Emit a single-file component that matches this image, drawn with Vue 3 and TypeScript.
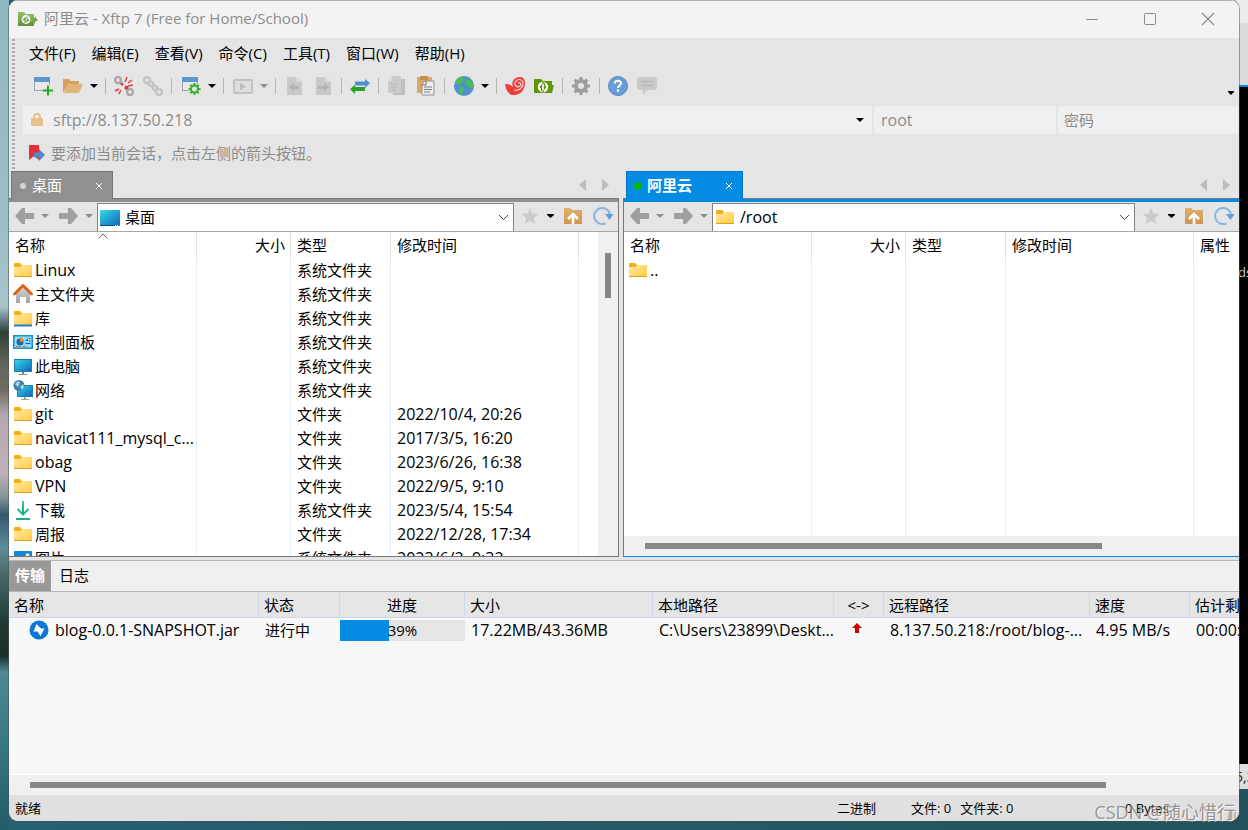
<script setup lang="ts">
interface Row { icon: string; name: string; type: string; date: string }
interface Pane { id: string; title: string; active: boolean; pathIcon: string; path: string; rows: Row[] }

const menus: string[] = ['文件(F)', '编辑(E)', '查看(V)', '命令(C)', '工具(T)', '窗口(W)', '帮助(H)']

const sys = '系统文件夹'
const dir = '文件夹'
const panes: Pane[] = [
  {
    id: 'local', title: '桌面', active: false, pathIcon: 'desktop', path: '桌面',
    rows: [
      { icon: 'folder', name: 'Linux', type: sys, date: '' },
      { icon: 'home', name: '主文件夹', type: sys, date: '' },
      { icon: 'library', name: '库', type: sys, date: '' },
      { icon: 'control', name: '控制面板', type: sys, date: '' },
      { icon: 'pc', name: '此电脑', type: sys, date: '' },
      { icon: 'network', name: '网络', type: sys, date: '' },
      { icon: 'folder', name: 'git', type: dir, date: '2022/10/4, 20:26' },
      { icon: 'folder', name: 'navicat111_mysql_c...', type: dir, date: '2017/3/5, 16:20' },
      { icon: 'folder', name: 'obag', type: dir, date: '2023/6/26, 16:38' },
      { icon: 'folder', name: 'VPN', type: dir, date: '2022/9/5, 9:10' },
      { icon: 'download', name: '下载', type: sys, date: '2023/5/4, 15:54' },
      { icon: 'folder', name: '周报', type: dir, date: '2022/12/28, 17:34' },
      { icon: 'picture', name: '图片', type: sys, date: '2023/6/2, 9:32' },
    ],
  },
  {
    id: 'remote', title: '阿里云', active: true, pathIcon: 'folder', path: '/root',
    rows: [{ icon: 'folder', name: '..', type: '', date: '' }],
  },
]

const isLatin = (text: string): boolean => /^[\x20-\x7e]+$/.test(text)

const progress = 39
</script>

<template>
  <div class="desktop">
    <div class="behind" aria-hidden="true">
      <div class="behind-top"></div>
      <div class="behind-term"><span>ds</span></div>
      <div class="behind-status"><span>5,3</span></div>
    </div>

    <svg class="defs" aria-hidden="true">
      <defs>
        <linearGradient id="gFolder" x1="0" y1="0" x2="1" y2="1"><stop offset="0" stop-color="#ffe9a6" /><stop offset="1" stop-color="#ffca3e" /></linearGradient>
        <linearGradient id="gScreen" x1="0" y1="0" x2="1" y2="1"><stop offset="0" stop-color="#35dbe6" /><stop offset="1" stop-color="#0b63bd" /></linearGradient>
        <linearGradient id="gHome" x1="0" y1="0" x2="0" y2="1"><stop offset="0" stop-color="#d8d8d8" /><stop offset="1" stop-color="#a2a2a2" /></linearGradient>
        <linearGradient id="gDown" x1="0" y1="0" x2="0" y2="1"><stop offset="0" stop-color="#35cd93" /><stop offset="1" stop-color="#12a688" /></linearGradient>
        <linearGradient id="gTan" x1="0" y1="0" x2="0" y2="1"><stop offset="0" stop-color="#e0b06c" /><stop offset="1" stop-color="#cf9554" /></linearGradient>
        <linearGradient id="gTitle" x1="0" y1="0" x2="0" y2="1"><stop offset="0" stop-color="#9cc06a" /><stop offset="1" stop-color="#628f3a" /></linearGradient>
      </defs>
    </svg>

    <main class="window">
      <header class="titlebar">
        <svg class="app-icon" width="20" height="16" viewBox="0 0 20 16"><path d="M0 1h6l1.500 2H16v12H0z" fill="url(#gTitle)" /><path d="M15 7h2V5l3 5h-2l-3 5z" fill="#78a44a" /><circle cx="8" cy="8.500" r="4.400" fill="#fff" /><path d="M7 12V7L5 9M9 5.500v5l2-2" stroke="#6f9b42" stroke-width="1.200" fill="none" /></svg>
        <h1>阿里云 - Xftp 7 (Free for Home/School)</h1>
        <div class="win-buttons">
          <button type="button" aria-label="最小化"><svg width="14" height="14"><path d="M1 7.500h12" stroke="#8a8a8a" /></svg></button>
          <button type="button" aria-label="最大化"><svg width="14" height="14"><rect x="1.500" y="1.500" width="11" height="11" rx="1" fill="none" stroke="#8a8a8a" /></svg></button>
          <button type="button" aria-label="关闭"><svg width="14" height="14"><path d="M1 1l12 12M13 1L1 13" stroke="#8a8a8a" stroke-width="1.100" /></svg></button>
        </div>
      </header>

      <div class="chrome">
        <nav class="menubar" aria-label="菜单">
          <button v-for="m in menus" :key="m" type="button">{{ m }}</button>
        </nav>

        <div class="toolbar" role="toolbar" aria-label="工具栏">
          <button type="button" aria-label="新建"><svg width="20" height="20"><rect x="1.500" y="1.500" width="15" height="13" fill="#e9e9e9" stroke="#9aa3a8" /><path d="M1 1h16v5H1z" fill="#5f97cf" /><path d="M15 9v10M10 14h10" stroke="#e5e5e5" stroke-width="4" /><path d="M15 9.500v10M10 14.500h10" stroke="#2aa81f" stroke-width="2" /></svg></button>
          <button type="button" class="split" aria-label="打开"><svg width="20" height="20"><path d="M0 17V3h6l2 2h8v4H5z" fill="#d3a160" /><path d="M1 17L5 8h15l-4 9z" fill="#dfb57c" /></svg></button>
          <button type="button" class="caret" aria-label="打开菜单"><svg width="8" height="4"><path d="M0 0h8L4 4z" fill="#000" /></svg></button>
          <i class="sep"></i>
          <button type="button" aria-label="断开"><svg width="20" height="20" fill="none"><circle cx="4" cy="4" r="3" stroke="#a9a9a9" stroke-width="2.400" /><circle cx="16" cy="16" r="3" stroke="#a9a9a9" stroke-width="2.400" /><path d="M6 6l3 3M11 12l3 3" stroke="#a9a9a9" stroke-width="2.400" /><circle cx="12.500" cy="11.500" r="2" fill="#e23b40" /><circle cx="8" cy="8" r="1.600" fill="#e23b40" /><path d="M11 6l2-5M14 7l4-3M5 13l-4 2M7 14l-2 4M14 10l5-1" stroke="#e23b40" stroke-width="1.400" /></svg></button>
          <button type="button" aria-label="重新连接"><svg width="20" height="20" fill="none" stroke="#c4c4c4" stroke-width="2.400"><circle cx="4" cy="4" r="3" /><circle cx="16" cy="16" r="3" /><rect x="5.500" y="6" width="5" height="4" rx="2" transform="rotate(45 8 8)" /><rect x="9.500" y="10" width="5" height="4" rx="2" transform="rotate(45 12 12)" /></svg></button>
          <i class="sep"></i>
          <button type="button" class="split" aria-label="属性"><svg width="20" height="20"><rect x="1.500" y="1.500" width="15" height="13" fill="#e9e9e9" stroke="#9aa3a8" /><path d="M1 1h16v5H1z" fill="#5f97cf" /><circle cx="13.500" cy="13" r="6" fill="#e5e5e5" /><circle cx="13.500" cy="13" r="3.500" fill="none" stroke="#36b02d" stroke-width="2" /><path d="M13.500 7v3M13.500 16v3M7.500 13h3M16.500 13h3M9.300 8.800l2 2M15.700 15.200l2 2M17.700 8.800l-2 2M11.300 15.200l-2 2" stroke="#36b02d" stroke-width="2" /></svg></button>
          <button type="button" class="caret" aria-label="属性菜单"><svg width="8" height="4"><path d="M0 0h8L4 4z" fill="#000" /></svg></button>
          <i class="sep"></i>
          <button type="button" class="split" aria-label="运行"><svg width="20" height="20"><rect x="1" y="4" width="18" height="13" rx="1" fill="#dedede" stroke="#c2c2c2" stroke-width="2" /><path d="M7 6.500v8l6-4z" fill="#bdbdbd" /></svg></button>
          <button type="button" class="caret" aria-label="运行菜单"><svg width="8" height="4"><path d="M0 0h8L4 4z" fill="#8d8d8d" /></svg></button>
          <i class="sep"></i>
          <button type="button" aria-label="传输到左侧"><svg width="20" height="20"><path d="M3 1h9l6 5v13H3z" fill="#c9c9c9" /><path d="M12 1v5h6z" fill="#dadada" /><path d="M5 11l5-4v3h5v3h-5v3z" fill="#b4b4b4" /></svg></button>
          <button type="button" aria-label="传输到右侧"><svg width="20" height="20"><path d="M3 1h9l6 5v13H3z" fill="#c9c9c9" /><path d="M12 1v5h6z" fill="#dadada" /><path d="M16 11l-5-4v3H5v3h6v3z" fill="#b4b4b4" /></svg></button>
          <i class="sep"></i>
          <button type="button" aria-label="同步"><svg width="20" height="20"><path d="M20 7l-5-4v2.500H5v4h10V12z" fill="#5090d0" /><path d="M0 13l5-4v2h10v4H5v3z" fill="#2aa124" /></svg></button>
          <i class="sep"></i>
          <button type="button" aria-label="复制"><svg width="20" height="20"><path d="M8 3h10v16H6V3z" fill="#bebebe" /><path d="M5 0h9v17H1V5z" fill="#cbcbcb" /><path d="M5 0v5H1z" fill="#dadada" /><path d="M4 8h7M4 11h7M4 14h5" stroke="#b8b8b8" /></svg></button>
          <button type="button" aria-label="粘贴"><svg width="20" height="20"><path d="M1 1h15v16H1z" fill="#dba868" /><path d="M4 0h8v4H4z" fill="#c98c48" /><path d="M9 5h9v14H6V8z" fill="#eee" stroke="#939393" /><path d="M10 5v4H6" fill="none" stroke="#777" /><path d="M8 11h8M8 13.500h8M8 16h6" stroke="#7c7c7c" /></svg></button>
          <i class="sep"></i>
          <button type="button" class="split" aria-label="语言"><svg width="20" height="20"><circle cx="10" cy="10" r="10" fill="#508fd2" /><path d="M3 3l4-2 4 2-1 2-2 1-2 3-3-1-2-2zM11 5l3-2 4 2 2 5-3 3-2-2-3-1zM5 10l5 2-1 4-2 3-2-2zM13 2l3 0-1-1z" fill="#4bb95c" /></svg></button>
          <button type="button" class="caret" aria-label="语言菜单"><svg width="8" height="4"><path d="M0 0h8L4 4z" fill="#000" /></svg></button>
          <i class="sep"></i>
          <button type="button" aria-label="Xshell"><svg width="20" height="20"><path d="M0 8c4 0 6 1 8 3-2-5 1-10 7-10 5 0 5 5 5 7-1 7-5 11-11 11C4 19 1 15 0 8z" fill="#f23b37" /><path d="M9 14c5 1 9-2 9-7 0-3-4-5-7-2-3 4 1 7 4 5 2-2 0-4-2-3" stroke="#fbdedd" stroke-width="1.100" fill="none" /></svg></button>
          <button type="button" aria-label="Xftp"><svg width="20" height="20"><path d="M0 3h7l2 2h9v4h2l-2 8H0z" fill="#5e960c" /><circle cx="9" cy="11" r="5.200" fill="#fff" /><path d="M7.500 15V9.500L6 11.500M10.500 7v5.500l1.500-2M9 6v2M9 14v2" stroke="#5e960c" stroke-width="1.300" fill="none" /></svg></button>
          <i class="sep"></i>
          <button type="button" aria-label="选项"><svg width="20" height="20"><circle cx="10" cy="10" r="5" fill="none" stroke="#9e9e9e" stroke-width="4" /><path d="M10 1v4M10 15v4M1 10h4M15 10h4M3.600 3.600l3 3M13.400 13.400l3 3M16.400 3.600l-3 3M6.600 13.400l-3 3" stroke="#9e9e9e" stroke-width="3" /></svg></button>
          <i class="sep"></i>
          <button type="button" aria-label="帮助"><svg width="20" height="20"><circle cx="10" cy="10" r="9.500" fill="#689fd6" stroke="#5587bb" /><path d="M6.800 7.500C7 3.500 13.300 4 13 7.500c-.200 2-3 2.200-3 4.500" stroke="#fff" stroke-width="2" fill="none" /><circle cx="10" cy="14.500" r="1.300" fill="#fff" /></svg></button>
          <button type="button" aria-label="反馈"><svg width="20" height="20"><path d="M2 1h16l2 2v9l-2 2h-8l-4 5v-5H2l-2-2V3z" fill="#cacaca" /><path d="M4 5.500h12M4 9.500h12" stroke="#b9b9b9" stroke-width="1.500" /></svg></button>
          <button type="button" class="caret overflow" aria-label="工具栏选项"><svg width="6" height="4"><path d="M0 0h6v1L3 4 0 1z" fill="#000" /></svg></button>
        </div>

        <div class="address">
          <div class="field host">
            <svg width="14" height="14"><path d="M4 6V4a3 3 0 0 1 6 0v2" fill="none" stroke="#e8c08c" stroke-width="2" /><rect x="1" y="5" width="12" height="8" rx="1" fill="#e8c08c" /></svg>
            <input type="text" value="sftp://8.137.50.218" aria-label="主机地址" />
            <button type="button" class="caret" aria-label="历史地址"><svg width="8" height="4"><path d="M0 0h8L4 4z" fill="#000" /></svg></button>
          </div>
          <div class="field user"><input type="text" value="root" aria-label="用户名" /></div>
          <div class="field pass"><input type="text" placeholder="密码" aria-label="密码" /></div>
        </div>

        <p class="notice">
          <svg width="16" height="16"><path d="M0 0h10v15l-5-4-5 4z" fill="#e03038" /><path d="M5 7.500h5V4l6 6-6 6v-3.500H5z" fill="#4c8acb" /></svg>
          要添加当前会话，点击左侧的箭头按钮。
        </p>
      </div>

      <div class="panes">
        <section v-for="p in panes" :key="p.id" class="pane" :class="{ active: p.active }">
          <div class="tabs">
            <div class="tab">
              <span class="dot"></span>
              <button type="button" class="tab-name">{{ p.title }}</button>
              <button type="button" class="tab-close" aria-label="关闭标签"><svg width="8" height="8"><path d="M1 1l6 6M7 1L1 7" stroke="#fff" /></svg></button>
            </div>
            <div class="tab-nav">
              <button type="button" aria-label="上一个标签"><svg width="8" height="12"><path d="M7 0v12L0 6z" fill="#bdbdbd" /></svg></button>
              <button type="button" aria-label="下一个标签"><svg width="8" height="12"><path d="M1 0v12l7-6z" fill="#bdbdbd" /></svg></button>
            </div>
          </div>

          <div class="pane-body">
            <div class="pathbar">
              <button type="button" class="go" aria-label="后退"><svg width="20" height="16"><path d="M0 8l7-8h3v5h9v6h-9v5H7z" fill="#a0a0a0" /></svg></button>
              <button type="button" class="mini" aria-label="后退记录"><svg width="8" height="4"><path d="M0 0h8L4 4z" fill="#8d8d8d" /></svg></button>
              <button type="button" class="go" aria-label="前进"><svg width="20" height="16"><path d="M19 8l-7-8H9v5H0v6h9v5h3z" fill="#a0a0a0" /></svg></button>
              <button type="button" class="mini" aria-label="前进记录"><svg width="8" height="4"><path d="M0 0h8L4 4z" fill="#8d8d8d" /></svg></button>
              <div class="path">
                <svg v-if="p.pathIcon === 'desktop'" width="22" height="20"><rect x="1" y="2" width="20" height="16" rx="1" fill="url(#gScreen)" /><path d="M1 17.500h15" stroke="#0a4f86" /><path d="M16 17.500h4" stroke="#fff" stroke-dasharray="1 1" /></svg>
                <svg v-else width="22" height="20"><path d="M2 3q0-1 1-1h5l2 2h9v3H2z" fill="#f5ae15" /><path d="M2 6h6l2-2h10v12H2z" fill="url(#gFolder)" /><path d="M2 15.500h18" stroke="#dca022" /></svg>
                <input type="text" :class="{ latin: isLatin(p.path) }" :value="p.path" aria-label="路径" />
                <button type="button" aria-label="展开路径"><svg width="11" height="7"><path d="M1 1l4.500 4.500L10 1" fill="none" stroke="#444" /></svg></button>
              </div>
              <button type="button" class="tool" aria-label="收藏"><svg width="18" height="18"><path d="M9 1l2.300 5.500 6.200.500-4.700 4 1.500 6L9 13.800 3.700 17l1.500-6L.500 7l6.200-.500z" fill="#cbcbcb" /></svg></button>
              <button type="button" class="mini dark" aria-label="收藏菜单"><svg width="7" height="4"><path d="M0 0h7v1L3.500 4 0 1z" fill="#000" /></svg></button>
              <button type="button" class="tool up" aria-label="上级目录"><svg width="20" height="18"><path d="M1 1h6l2 2h10v14H1z" fill="url(#gTan)" /><path d="M5 12l5-5 5 5M10 8v9" fill="none" stroke="#fff" stroke-width="2.600" /></svg></button>
              <button type="button" class="tool refresh" aria-label="刷新"><svg width="21" height="20"><path d="M12.500 17.300A8 8 0 1 1 17 8.500" fill="none" stroke="#86b4e0" stroke-width="2" /><path d="M12 8h8.500l-4 6z" fill="#5f9fda" /></svg></button>
            </div>

            <div class="list">
              <div class="table-wrap">
                <table>
                  <colgroup>
                    <col class="c-name" /><col class="c-size" /><col class="c-type" /><col class="c-date" /><col />
                  </colgroup>
                  <thead>
                    <tr>
                      <th class="name">名称<svg v-if="!p.active" class="sort" width="10" height="6"><path d="M.500 5.500L5 1l4.500 4.500" fill="none" stroke="#666" /></svg></th>
                      <th class="size">大小</th><th>类型</th><th>修改时间</th><th>{{ p.active ? '属性' : '' }}</th>
                    </tr>
                  </thead>
                  <tbody>
                    <tr v-for="r in p.rows" :key="r.name">
                      <td class="file">
                        <div>
                          <svg v-if="r.icon === 'home'" width="20" height="20"><path d="M3 9l7-7 7 7v10h-4v-6H7v6H3z" fill="url(#gHome)" /><path d="M1.500 10L10 1.500l8.500 8.500" fill="none" stroke="#e0600f" stroke-width="2.800" stroke-linecap="round" stroke-linejoin="round" /></svg>
                          <svg v-else-if="r.icon === 'control'" width="20" height="20"><rect x=".750" y="3.750" width="18.500" height="12.500" fill="#8fdcf8" stroke="#1791d2" stroke-width="1.500" /><circle cx="7" cy="10" r="3.500" fill="#0f6cbd" /><path d="M7 10V5.500A4.500 4.500 0 0 1 11 9.500z" fill="#f08a24" /><path d="M12.500 8.500h2V6.500M16 6.500h1.500M16 9h1.500M12.500 11.500h5" stroke="#0f6cbd" stroke-width="1.200" fill="none" /><path d="M3 14.500h5M10 14.500h3" stroke="#d5791e" /></svg>
                          <svg v-else-if="r.icon === 'pc'" width="20" height="20"><rect x="1.500" y="3.500" width="17" height="12" fill="url(#gScreen)" stroke="#2380a8" /><path d="M9 16h2v2h3v1H6v-1h3z" fill="#7a8790" /></svg>
                          <svg v-else-if="r.icon === 'network'" width="20" height="20"><rect x="4.500" y="5.500" width="15" height="11" fill="url(#gScreen)" stroke="#2380a8" /><path d="M11 17h2v2h3v1H8v-1h3z" fill="#9aa5ac" /><circle cx="6" cy="5.500" r="5.500" fill="#3a83ae" /><path d="M2 4l3-3 2 2-2 4zM7 7l3-3 1 3-2 3z" fill="#a9d7e8" /></svg>
                          <svg v-else-if="r.icon === 'download'" width="20" height="20"><path d="M4.500 9l5.500 5.500L15.500 9" fill="none" stroke="#1fb48c" stroke-width="2" /><path d="M9 1h2v13H9z" fill="url(#gDown)" /><path d="M3 19h14" stroke="#19ad8a" stroke-width="2" /></svg>
                          <svg v-else-if="r.icon === 'picture'" width="20" height="20"><rect x="1" y="3" width="18" height="15" rx="1" fill="#1486d8" /><circle cx="14.500" cy="7" r="1.800" fill="#fff" /><path d="M2 17l7-8 8 8z" fill="#bfe6fb" /></svg>
                          <svg v-else width="20" height="20"><path d="M1 4q0-1 1-1h5l2 2h9v3H1z" fill="#f5ae15" /><path d="M1 7h6l2-2h10v12H1z" fill="url(#gFolder)" /><path v-if="r.icon === 'library'" d="M1 17.500h18" stroke="#1787cc" stroke-width="2" /><path v-else d="M1 16.500h18" stroke="#dca022" /></svg>
                          <span :class="{ latin: isLatin(r.name) }">{{ r.name }}</span>
                        </div>
                      </td>
                      <td></td><td>{{ r.type }}</td><td class="latin">{{ r.date }}</td><td></td>
                    </tr>
                    <tr class="rest" aria-hidden="true"><td></td><td></td><td></td><td></td><td></td></tr>
                  </tbody>
                </table>
              </div>
              <div v-if="!p.active" class="vscroll"><div class="thumb"></div></div>
            </div>
            <div v-if="p.active" class="hscroll"><div class="thumb"></div></div>
          </div>
        </section>
      </div>

      <section class="transfer">
        <div class="lower-tabs">
          <button type="button" class="on">传输</button>
          <button type="button">日志</button>
        </div>
        <div class="queue">
          <table>
            <colgroup>
              <col class="q-name" /><col class="q-state" /><col class="q-prog" /><col class="q-size" /><col class="q-local" /><col class="q-dir" /><col class="q-remote" /><col class="q-speed" /><col class="q-eta" />
            </colgroup>
            <thead>
              <tr><th>名称</th><th>状态</th><th class="mid">进度</th><th>大小</th><th>本地路径</th><th class="mid">&lt;-&gt;</th><th>远程路径</th><th>速度</th><th>估计剩余时间</th></tr>
            </thead>
            <tbody>
              <tr>
                <td class="job"><div><svg width="20" height="20"><circle cx="10" cy="10" r="9.500" fill="#0b78d8" /><path d="M7.500 4L12 8.500h3.500L11.500 16l-3-4.500H4.500z" fill="#fff" /></svg><span class="latin">blog-0.0.1-SNAPSHOT.jar</span></div></td>
                <td>进行中</td>
                <td class="bar-cell"><div class="bar" role="progressbar" :aria-valuenow="progress"><div class="fill" :style="{ width: progress + '%' }"></div><span>{{ progress }}%</span></div></td>
                <td class="latin">17.22MB/43.36MB</td>
                <td class="latin">C:\Users\23899\Deskt...</td>
                <td class="arrow"><svg width="10" height="10"><path d="M5 0l5 5H7v5H3V5H0z" fill="#cc0000" /></svg></td>
                <td class="latin">8.137.50.218:/root/blog-...</td>
                <td class="latin">4.95 MB/s</td>
                <td class="latin">00:00:05</td>
              </tr>
            </tbody>
          </table>
        </div>
        <div class="hscroll wide"><div class="thumb"></div></div>
      </section>

      <footer class="status">
        <span class="ready">就绪</span>
        <span class="mode">二进制</span>
        <span class="counts"><span>文件: 0</span><span>文件夹: 0</span></span>
        <span class="bytes">0 Bytes</span>
        <i class="grip"></i>
      </footer>
    </main>
    <div class="watermark">CSDN @随心惜行</div>
  </div>
</template>

<style>
html, body { margin: 0; background: #23525e; }
</style>

<style scoped>
* { box-sizing: border-box; }
.desktop {
  position: relative;
  height: 100vh;
  overflow: hidden;
  padding: 0 9px 9px;
  font: 15px/20px "Open Sans", "Noto Sans CJK SC", sans-serif;
  color: #000;
  background:
    linear-gradient(180deg, #8fb6c3 0, #9fc0ca 30%, #a9c3ca 37%, #7d94a0 38%, #2e4238 40%, #62665a 44%, #6f6c62 47%, #b3a7ae 50%, #c0b2b8 57%, #7f9297 60%, #33586e 62%, #5d8d98 66%, #4b6b69 69%, #1f3a34 75%, #173029 79%, #4f8991 81%, #357782 90%, #225c68 100%) left / 9px 100% no-repeat,
    linear-gradient(90deg, #256170, #23525c);
}
.defs { position: absolute; width: 0; height: 0; }
.behind { position: absolute; top: 0; right: 0; width: 20px; height: 789px; display: flex; flex-direction: column; }
.behind-top { height: 87px; background: linear-gradient(#ececec 23px, #dcdcdc 23px); border-bottom: 2px solid #0a84dc; }
.behind-term { flex: 1; background: #000; color: #c9c9c9; padding: 175px 0 0 10px; font-size: 13px; overflow: hidden; }
.behind-status { height: 25px; background: #dedede; color: #222; padding: 3px 0 0 7px; font-size: 14px; overflow: hidden; }

button { border: 0; padding: 0; background: none; font: inherit; color: inherit; display: flex; align-items: center; justify-content: center; }
input { border: 0; outline: 0; padding: 0; background: none; font: inherit; color: inherit; min-width: 0; flex: 1; }
svg { display: block; flex: none; }
.latin { font-size: 16px; }

.window {
  position: relative;
  height: 100%;
  display: grid;
  grid-template-columns: minmax(0, 1fr);
  grid-template-rows: auto auto minmax(0, 386fr) minmax(0, 238fr) auto;
  background: #e5e5e5;
  border-radius: 9px;
  overflow: hidden;
  box-shadow: 0 0 0 1px rgba(70, 80, 85, .5);
}
.titlebar { display: flex; align-items: center; height: 38px; padding: 0 2px 2px 9px; background: #f3f3f3; border-top: 1px solid #b0b0b0; color: #8c8c8c; }
.titlebar h1 { flex: 1; margin: 0 0 0 6px; padding-bottom: 2px; font-size: 15px; font-weight: 400; }
.win-buttons { display: flex; }
.win-buttons button { width: 58px; height: 34px; }

.chrome { position: relative; padding-left: 14px; }
.chrome::before { content: ""; position: absolute; left: 3px; top: 1px; bottom: 0; width: 3px; background: repeating-linear-gradient(#aaa 0 2px, #f6f6f6 2px 3px, transparent 3px 4px); }
.menubar { display: flex; gap: 16px; height: 32px; padding: 0 0 2px 6px; }
.toolbar { display: flex; align-items: center; height: 32px; margin-bottom: 4px; padding-left: 5px; }
.toolbar button { width: 29px; height: 28px; }
.toolbar .split { padding-left: 2px; }
.toolbar .caret { width: 15px; }
.toolbar .overflow { margin-left: auto; margin-right: 1px; padding-top: 14px; }
.sep { width: 8px; height: 16px; background: linear-gradient(#b4b4b4, #b4b4b4) center / 1px 100% no-repeat; }

.address { display: flex; gap: 2px; padding-right: 1px; color: #8c8c8c; font-size: 16px; }
.field { display: flex; align-items: center; height: 28px; background: #f0f0f0; }
.host { flex: 1; padding-left: 7px; gap: 9px; }
.host .caret { width: 24px; height: 28px; }
.user { width: 182px; padding-left: 7px; }
.pass { width: 180px; padding-left: 6px; font-size: 15px; }
.pass input::placeholder { color: #8c8c8c; opacity: 1; }
.notice { display: flex; align-items: center; gap: 6px; height: 37px; margin: 0; padding-left: 6px; color: #8c8c8c; }

.panes { display: grid; grid-template-columns: minmax(0, 610fr) minmax(0, 616fr); gap: 4px; }
.pane { display: flex; flex-direction: column; min-height: 0; min-width: 0; }
.tabs { position: relative; z-index: 1; display: flex; justify-content: space-between; height: 27px; padding: 0 10px 0 2px; }
.tab { display: flex; align-items: center; height: 28px; width: 102px; padding: 0 9px 0 8px; background: #909090; border: 1px solid #777; border-width: 1px 1px 0; color: #fff; }
.dot { width: 6px; height: 6px; border-radius: 3px; background: #d4d4d4; margin-right: 6px; }
.tab-name { flex: 1; justify-content: flex-start; padding-bottom: 2px; }
.active .tabs { padding: 0 9px 0 3px; }
.active .tab { width: 117px; padding-left: 7px; background: #048be4; border-color: #0878c4; font-weight: 700; }
.active .dot { width: 8px; height: 8px; border-radius: 4px; background: #0cb50c; margin-right: 5px; }
.tab-nav { display: flex; gap: 14px; align-items: center; }
.pane-body { flex: 1; min-height: 0; display: flex; flex-direction: column; border: 1px solid #777; border-left: 0; background: #fff; }
.pane-body::before { content: ""; flex: 0 0 3px; background: #909090; }
.active .pane-body { border-left: 1px solid #777; border-right: 0; border-bottom-color: #048be4; }
.active .pane-body::before { background: #048be4; }

.pathbar { display: flex; align-items: flex-start; flex: 0 0 30px; padding-left: 6px; background: #e5e5e5; border-bottom: 1px solid #a6a6a6; }
.go { width: 20px; height: 28px; }
.mini { width: 24px; height: 28px; padding-right: 5px; }
.mini + .path { margin-left: -6px; }
.path { flex: 1; min-width: 0; align-self: stretch; display: flex; align-items: center; margin-top: 1px; padding: 0 4px 0 1px; background: #fff; border: 1px solid #808080; border-bottom: 0; }
.path input { margin-left: 4px; padding-bottom: 2px; }
.path button { width: 11px; height: 26px; }
.tool { width: 18px; height: 28px; margin-left: 7px; }
.dark { width: 23px; padding: 0 1px 0 0; }
.up { width: 20px; margin-left: 1px; }
.refresh { width: 21px; margin: 0 4px 0 10px; }

.list { flex: 1; min-height: 0; display: flex; }
.table-wrap { flex: 1; min-width: 0; overflow: hidden; }
table { border-collapse: separate; border-spacing: 0; table-layout: fixed; width: 100%; }
.list table { height: 100%; }
th, td { padding: 0 0 2px 6px; text-align: left; font-weight: 400; white-space: nowrap; overflow: hidden; }
.list th { position: relative; height: 27px; border-right: 1px solid #e2e2e2; }
.list td { height: 24px; border-right: 1px solid #e6effa; }
.list th:last-child, .list td:last-child { border-right: 0; }
.list .rest td { height: auto; }
.c-name { width: 188px; }
.c-size { width: 94px; }
.c-type { width: 100px; }
.c-date { width: 188px; }
.list .size { text-align: right; padding: 0 5px 2px 0; }
.sort { position: absolute; top: 1px; left: calc(50% - 5px); }
.list .file { padding-left: 4px; }
.file div { display: flex; align-items: center; gap: 2px; }
.vscroll { flex: 0 0 20px; background: #f0f0f0; padding: 21px 7px; }
.vscroll .thumb { height: 16%; background: #868686; }
.hscroll { flex: 0 0 20px; background: #f0f0f0; padding: 7px 0 7px 21px; }
.hscroll .thumb { width: 77%; height: 6px; background: #868686; }
.wide .thumb { width: 89%; }
.wide { border-top: 1px solid #fff; flex-basis: 21px; }

.transfer { display: flex; flex-direction: column; min-height: 0; padding-top: 3px; }
.lower-tabs { display: flex; flex: 0 0 32px; background: #f0f0f0; border: 1px solid #b6b6b6; border-width: 1px 0; }
.lower-tabs button { padding: 0 8px 2px; }
.lower-tabs .on { padding: 0 6px 2px; background: #999; color: #fff; font-weight: 700; }
.queue { flex: 1; min-height: 0; overflow: hidden; background: #f8f8f8; }
.queue table { width: 1331px; }
.queue th { height: 26px; padding: 0 0 0 5px; background: #e5e5e5; border: 1px solid #cfd9e8; border-width: 0 1px 1px 0; }
.queue td { height: 25px; }
.queue th.mid { padding: 0; text-align: center; }
.q-name { width: 250px; }
.q-state { width: 81px; }
.q-prog { width: 125px; }
.q-size { width: 188px; }
.q-local { width: 181px; }
.q-dir { width: 50px; }
.q-remote { width: 206px; }
.q-speed { width: 100px; }
.q-eta { width: 150px; }
.queue .job { padding-left: 20px; }
.job div { display: flex; align-items: center; gap: 6px; }
.queue .bar-cell { padding: 0; }
.bar { position: relative; height: 21px; background: #e5e5e5; }
.fill { height: 100%; background: #048be4; }
.bar span { position: absolute; inset: 0; text-align: center; }
.arrow svg { margin: 0 auto 4px 12px; }

.status { display: flex; align-items: center; height: 26px; padding-left: 6px; background: #e0e0e0; font-size: 13px; position: relative; }
.ready { flex: 1; }
.mode { width: 74px; }
.counts { width: 214px; display: flex; gap: 9px; }
.bytes { width: 114px; }
.grip { position: absolute; right: 2px; bottom: 2px; width: 9px; height: 9px; background: repeating-linear-gradient(90deg, #bbb 0 2px, transparent 2px 3px); }
.watermark { position: absolute; right: 13px; bottom: 6px; font-size: 18px; line-height: 24px; color: rgba(125, 125, 125, .8); text-shadow: 1px 1px 0 rgba(255, 255, 255, .7); }
</style>
